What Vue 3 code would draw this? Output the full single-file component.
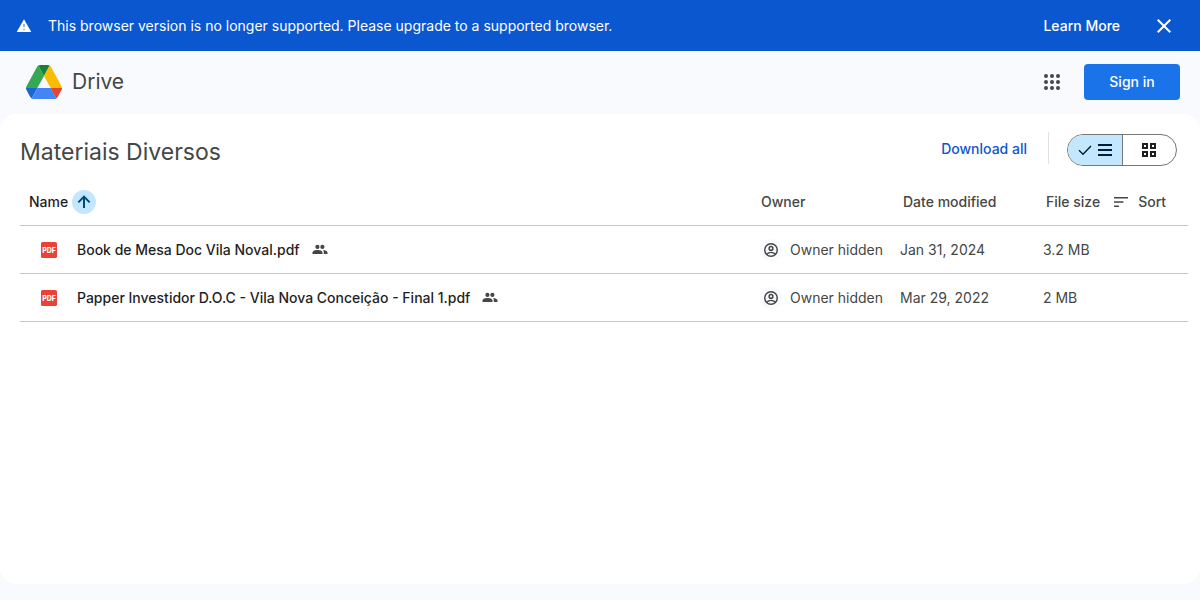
<script setup>
import { ref } from 'vue'

const view = ref('list')
const files = [
  { name: 'Book de Mesa Doc Vila Noval.pdf', owner: 'Owner hidden', modified: 'Jan 31, 2024', size: '3.2 MB' },
  { name: 'Papper Investidor D.O.C - Vila Nova Conceição - Final 1.pdf', owner: 'Owner hidden', modified: 'Mar 29, 2022', size: '2 MB' },
]
</script>

<template>
  <div class="page">
    <div class="banner" role="alert">
      <svg class="warn" viewBox="0 0 24 24" width="16" height="16" aria-hidden="true">
        <path fill="#fff" d="M1 21h22L12 2 1 21z" />
        <path fill="#7c8fc4" d="M13 18h-2v-2h2v2zm0-4h-2V9h2v5z" />
      </svg>
      <span class="banner-text">This browser version is no longer supported. Please upgrade to a supported browser.</span>
      <a class="learn" href="#">Learn More</a>
      <button class="close" type="button" aria-label="Close">
        <svg viewBox="0 0 24 24" width="24" height="24"><path fill="#fff" d="M19 6.41 17.59 5 12 10.59 6.41 5 5 6.41 10.59 12 5 17.59 6.41 19 12 13.41 17.59 19 19 17.59 13.41 12z" /></svg>
      </button>
    </div>

    <header class="header">
      <a class="brand" href="#">
        <svg viewBox="0 0 87.3 78" width="36" height="34" preserveAspectRatio="none" aria-hidden="true">
          <path fill="#1967d2" d="m6.6 66.85 3.85 6.65c.8 1.4 1.95 2.5 3.3 3.3l13.75-23.8h-27.5c0 1.55.4 3.1 1.2 4.5z" />
          <path fill="#34a853" d="m43.65 25-13.75-23.8c-1.35.8-2.5 1.9-3.3 3.3l-25.4 44a9.06 9.06 0 0 0-1.2 4.5h27.5z" />
          <path fill="#ea4335" d="m73.55 76.8c1.35-.8 2.5-1.9 3.3-3.3l1.6-2.75 7.65-13.25c.8-1.4 1.2-2.95 1.2-4.5h-27.5l5.85 11.5z" />
          <path fill="#188038" d="m43.65 25 13.75-23.8c-1.35-.8-2.9-1.2-4.5-1.2h-18.5c-1.6 0-3.15.45-4.5 1.2z" />
          <path fill="#4285f4" d="m59.8 53h-32.3l-13.75 23.8c1.35.8 2.9 1.2 4.5 1.2h50.8c1.6 0 3.15-.45 4.5-1.2z" />
          <path fill="#fbbc04" d="m73.4 26.5-12.7-22c-.8-1.4-1.95-2.5-3.3-3.3l-13.75 23.8 16.15 28h27.45c0-1.55-.4-3.1-1.2-4.5z" />
        </svg>
        <span>Drive</span>
      </a>
      <button class="apps" type="button" aria-label="Google apps">
        <svg viewBox="0 0 24 24" width="24" height="24">
          <g fill="#444746">
            <circle cx="6" cy="6" r="2" /><circle cx="12" cy="6" r="2" /><circle cx="18" cy="6" r="2" />
            <circle cx="6" cy="12" r="2" /><circle cx="12" cy="12" r="2" /><circle cx="18" cy="12" r="2" />
            <circle cx="6" cy="18" r="2" /><circle cx="12" cy="18" r="2" /><circle cx="18" cy="18" r="2" />
          </g>
        </svg>
      </button>
      <a class="signin" href="#">Sign in</a>
    </header>

    <main class="panel">
      <div class="toolbar">
        <h1>Materiais Diversos</h1>
        <button class="download" type="button">Download all</button>
        <div class="segmented" role="group" aria-label="Layout">
          <button type="button" class="seg" :class="{ on: view === 'list' }" :aria-pressed="view === 'list'" aria-label="List layout" @click="view = 'list'">
            <svg v-if="view === 'list'" viewBox="0 0 18 18" width="18" height="18"><path fill="none" stroke="#001d35" stroke-width="1.4" d="M3 9.3l4 4L15 5" /></svg>
            <svg viewBox="0 0 18 18" width="18" height="18"><path fill="#001d35" d="M2 3h14v2H2zM2 8h14v2H2zM2 13h14v2H2z" /></svg>
          </button>
          <button type="button" class="seg" :class="{ on: view === 'grid' }" :aria-pressed="view === 'grid'" aria-label="Grid layout" @click="view = 'grid'">
            <svg viewBox="0 0 18 18" width="18" height="18"><path fill="none" stroke="#1f1f1f" stroke-width="2" d="M3 3h4v4H3zM11 3h4v4h-4zM3 11h4v4H3zM11 11h4v4h-4z" /></svg>
          </button>
        </div>
      </div>

      <table class="files">
        <colgroup>
          <col>
          <col class="c-owner">
          <col class="c-date">
          <col class="c-size">
        </colgroup>
        <thead>
          <tr>
            <th scope="col" aria-sort="ascending">
              <div class="line name-head">
                <span>Name</span>
                <button class="arrow" type="button" aria-label="Reverse sort direction">
                  <svg viewBox="0 0 24 24" width="16" height="16"><path fill="none" stroke="#004a77" stroke-width="3" d="M12 21V5M3.500 12.500l8.500-8.500 8.500 8.500" /></svg>
                </button>
              </div>
            </th>
            <th scope="col" class="owner-head">Owner</th>
            <th scope="col" class="date-head">Date modified</th>
            <th scope="col">
              <div class="line size-head">
                <span>File size</span>
                <button class="sort" type="button">
                  <svg viewBox="0 0 18 18" width="18" height="18" aria-hidden="true"><path fill="#444746" d="M2 4h14v1.6H2zM2 8.2h9.5v1.6H2zM2 12.4h5V14H2z" /></svg>
                  <span>Sort</span>
                </button>
              </div>
            </th>
          </tr>
        </thead>
        <tbody>
          <tr v-for="file in files" :key="file.name">
            <td>
              <div class="line name-cell">
                <svg viewBox="0 0 16 16" width="16" height="16" role="img" aria-label="PDF">
                  <rect width="16" height="16" rx="1.6" fill="#ea4335" />
                  <text x="8" y="10.5" text-anchor="middle" class="pdf">PDF</text>
                </svg>
                <span class="file-name">{{ file.name }}</span>
                <svg viewBox="0 0 16 16" width="16" height="16" role="img" aria-label="Shared">
                  <g fill="#444746">
                    <circle cx="5.400" cy="4.900" r="2.100" />
                    <circle cx="10.400" cy="4.900" r="2.100" />
                    <path d="M.5 12v-1.500c0-1.700 2.800-2.500 5-2.500s5 .8 5 2.500V12z" />
                    <path d="M11.800 12h3.700v-1.500c0-1.500-2.300-2.300-4.500-2.500.6.600.9 1.300.8 4z" />
                  </g>
                </svg>
              </div>
            </td>
            <td>
              <div class="line owner-cell">
                <span class="avatar">
                  <svg viewBox="0 0 24 24" width="16" height="16" aria-hidden="true">
                    <g fill="none" stroke="#444746" stroke-width="2.2">
                      <circle cx="12" cy="12" r="9.4" />
                      <circle cx="12" cy="9.6" r="2.8" />
                      <path d="M5.4 18.3c3.8-3.2 9.4-3.2 13.2 0" />
                    </g>
                  </svg>
                </span>
                <span>{{ file.owner }}</span>
              </div>
            </td>
            <td>{{ file.modified }}</td>
            <td>{{ file.size }}</td>
          </tr>
        </tbody>
      </table>
    </main>
  </div>
</template>

<style>
body {
  margin: 0;
}
</style>

<style scoped>
.page {
  display: flex;
  flex-direction: column;
  min-height: 100vh;
  box-sizing: border-box;
  padding-bottom: 16px;
  background: #f8fafd;
  color: #444746;
  font-family: "Google Sans", Inter, Roboto, sans-serif;
  font-size: 14px;
  line-height: 20px;
}
svg {
  display: block;
  flex: none;
}
button {
  padding: 0;
  border: 0;
  background: none;
  color: inherit;
  font: inherit;
  cursor: pointer;
}
a {
  color: inherit;
  text-decoration: none;
}
.banner {
  display: flex;
  align-items: center;
  height: 51px;
  padding: 0 24px 0 16px;
  background: #0b57d0;
  color: #fff;
}
.banner-text {
  flex: 1;
  margin-left: 16px;
}
.learn {
  font-weight: 500;
}
.close {
  margin-left: 32px;
}
.header {
  display: flex;
  align-items: center;
  height: 63px;
  box-sizing: border-box;
  padding: 0 20px 1px 26px;
}
.brand {
  display: flex;
  align-items: center;
  gap: 10px;
  margin-right: auto;
  font-size: 21px;
  line-height: 28px;
}
.signin {
  width: 96px;
  margin-left: 20px;
  border-radius: 4px;
  background: #1a73e8;
  color: #fff;
  font-weight: 500;
  line-height: 36px;
  text-align: center;
}
.panel {
  flex: 1;
  border-radius: 16px;
  background: #fff;
}
.toolbar {
  display: flex;
  align-items: center;
  height: 64px;
  padding: 8px 23px 0 20px;
  box-sizing: border-box;
}
.toolbar h1 {
  flex: 1;
  margin: 0;
  padding-top: 4px;
  font-size: 23px;
  font-weight: 400;
  line-height: 32px;
}
.download {
  height: 32px;
  box-sizing: border-box;
  margin-bottom: 4px;
  padding: 2px 21px 0 0;
  border-right: 1px solid #e1e3e1;
  color: #0b57d0;
  font-weight: 500;
}
.segmented {
  display: flex;
  height: 32px;
  box-sizing: border-box;
  margin-left: 18px;
  border: 1px solid #747775;
  border-radius: 16px;
  overflow: hidden;
}
.seg {
  display: flex;
  align-items: center;
  justify-content: center;
  gap: 2px;
  width: 54px;
}
.seg + .seg {
  padding-right: 2px;
  border-left: 1px solid #747775;
}
.seg.on {
  background: #c2e7ff;
}
.files {
  width: calc(100% - 32px);
  margin: 0 12px 0 20px;
  border-collapse: collapse;
  table-layout: fixed;
}
.c-owner {
  width: 140px;
}
.c-date {
  width: 143px;
}
.c-size {
  width: 145px;
}
th,
td {
  height: 47px;
  padding: 0;
  border-bottom: 1px solid #c4c7c5;
  text-align: left;
  white-space: nowrap;
}
th {
  font-weight: 500;
}
.line {
  display: flex;
  align-items: center;
}
.name-head {
  gap: 4px;
  padding-left: 9px;
  color: #1f1f1f;
}
.arrow {
  display: flex;
  align-items: center;
  justify-content: center;
  width: 24px;
  height: 24px;
  border-radius: 50%;
  background: #c2e7ff;
}
th.owner-head {
  padding-left: 1px;
}
th.date-head {
  padding-left: 3px;
}
.size-head {
  gap: 12px;
  padding-left: 3px;
}
.sort {
  display: flex;
  align-items: center;
  gap: 8px;
}
.name-cell {
  gap: 12px;
  padding-left: 21px;
}
.file-name {
  margin-left: 8px;
  color: #1f1f1f;
  font-weight: 500;
}
.pdf {
  fill: #fff;
  font-size: 7px;
  font-weight: 800;
}
.owner-cell {
  gap: 8px;
}
.avatar {
  display: flex;
  align-items: center;
  justify-content: center;
  width: 22px;
  height: 22px;
  border-radius: 50%;
  background: #f8fafd;
}
</style>
